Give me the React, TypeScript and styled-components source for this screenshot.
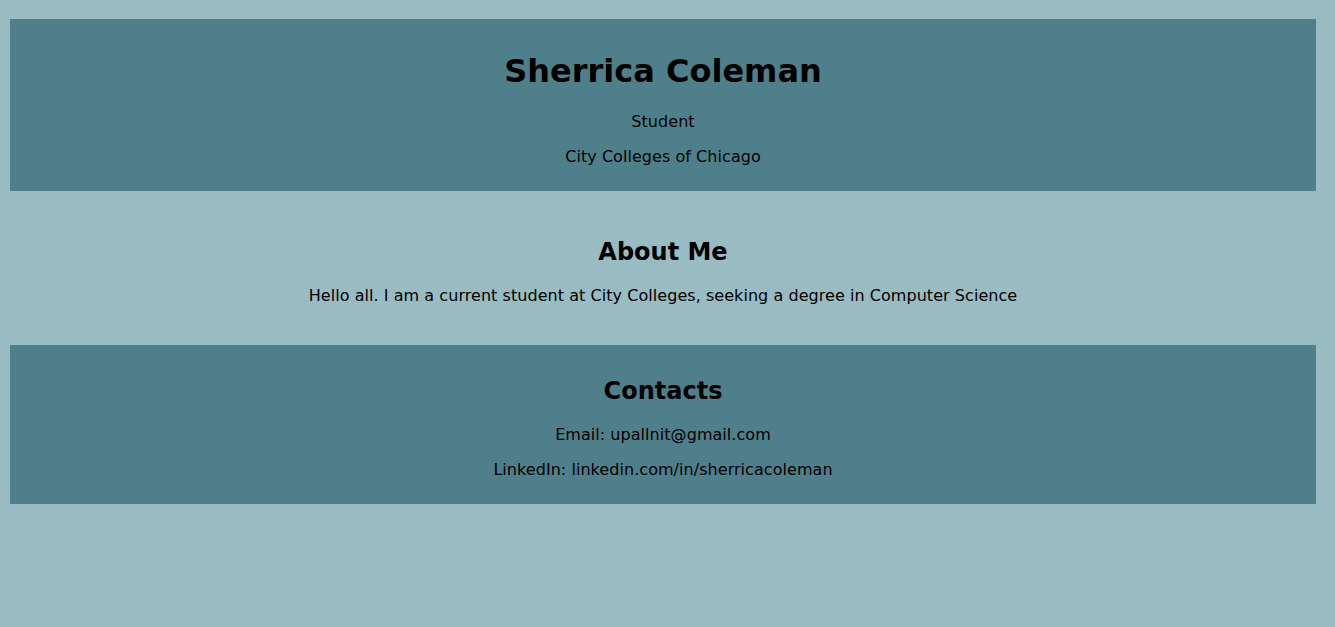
import React from "react";
import styled, { createGlobalStyle } from "styled-components";

const Global = createGlobalStyle`
  html, body {
    margin: 0;
    padding: 0;
    background: #99bbc2;
  }
  body {
    font-family: "DejaVu Sans", Verdana, sans-serif;
    color: #000;
  }
`;

const Page = styled.div`
  padding: 19px 19px 0 10px;
  display: flex;
  flex-direction: column;
`;

const Section = styled.section<{ $filled?: boolean; $pad: string }>`
  background: ${(p) => (p.$filled ? "#4f7f8a" : "transparent")};
  text-align: center;
  padding: ${(p) => p.$pad};
`;

const Name = styled.h1`
  margin: 0;
  font-size: 32px;
  font-weight: bold;
  line-height: 38px;
`;

const Heading = styled.h2`
  margin: 0;
  font-size: 24px;
  font-weight: bold;
  line-height: 28px;
`;

const Line = styled.p<{ $gap?: number }>`
  margin: ${(p) => p.$gap ?? 0}px 0 0;
  font-size: 16px;
  line-height: 35px;
  letter-spacing: 0.05px;
`;

export default function App() {
  return (
    <>
      <Global />
      <Page>
        <Section $filled $pad="33px 0 17px">
          <Name>Sherrica Coleman</Name>
          <Line $gap={14}>Student</Line>
          <Line>City Colleges of Chicago</Line>
        </Section>
        <Section $pad="47px 0 32px">
          <Heading>About Me</Heading>
          <Line $gap={12}>
            Hello all. I am a current student at City Colleges, seeking a degree in Computer Science
          </Line>
        </Section>
        <Section $filled $pad="32px 0 17px">
          <Heading>Contacts</Heading>
          <Line $gap={12}>Email: upallnit@gmail.com</Line>
          <Line>LinkedIn: linkedin.com/in/sherricacoleman</Line>
        </Section>
      </Page>
    </>
  );
}
